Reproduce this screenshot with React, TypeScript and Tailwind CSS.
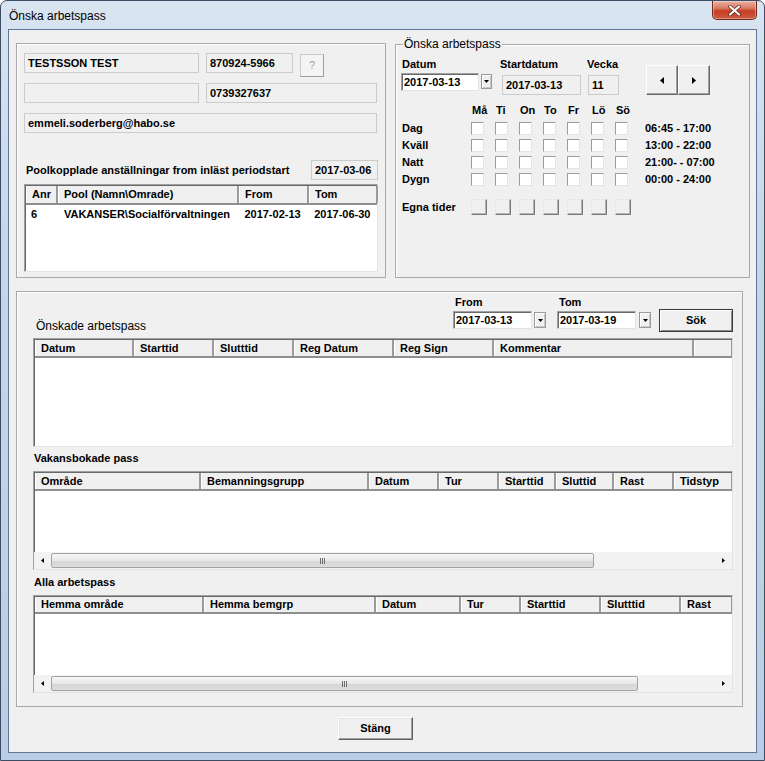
import React from "react";

type Col = { label: string; w: string };

const sunken =
  "border border-t-[#a0a0a0] border-l-[#a0a0a0] border-r-[#e3e3e3] border-b-[#e3e3e3] shadow-[inset_1px_1px_0_#696969]";
const raised =
  "border border-t-white border-l-white border-r-[#696969] border-b-[#696969] shadow-[inset_-1px_-1px_0_#a0a0a0]";

function RoBox({ w, children }: { w: string; children?: React.ReactNode }) {
  return (
    <div
      className={`${w} h-[20px] shrink-0 bg-[#f0f0f0] border border-[#cbcbcb] flex items-center pl-[3px] text-[11px] font-bold`}
    >
      {children}
    </div>
  );
}

function Tri({ dir, size = 3 }: { dir: "left" | "right" | "down"; size?: number }) {
  if (dir === "down")
    return (
      <svg width="5" height="3" viewBox="0 0 5 3">
        <path d="M0 0h5L2.5 3z" fill="#000" />
      </svg>
    );
  const w = size + 1;
  const h = size * 2 + 1;
  return (
    <svg width={w} height={h} viewBox={`0 0 ${w} ${h}`}>
      {dir === "left" ? (
        <path d={`M${w} 0V${h}L0 ${h / 2}z`} fill="#000" />
      ) : (
        <path d={`M0 0V${h}L${w} ${h / 2}z`} fill="#000" />
      )}
    </svg>
  );
}

function DropBtn({ className }: { className: string }) {
  return (
    <div
      className={`${className} shrink-0 bg-[#f0f0f0] border border-[#9a9a9a] shadow-[inset_1px_1px_0_#fff,inset_-1px_-1px_0_#c8c8c8] flex items-center justify-center`}
    >
      <Tri dir="down" />
    </div>
  );
}

function DateInput({ value }: { value: string }) {
  return (
    <div
      className={`w-[79px] h-[18px] shrink-0 bg-white ${sunken} flex items-center pl-[2px] text-[11px] font-bold`}
    >
      {value}
    </div>
  );
}

function Grip() {
  return (
    <div className="flex gap-[1px]">
      <span className="w-[1px] h-[6px] bg-[#6b6b6b]" />
      <span className="w-[1px] h-[6px] bg-[#6b6b6b]" />
      <span className="w-[1px] h-[6px] bg-[#6b6b6b]" />
    </div>
  );
}

function HScroll({ thumbW }: { thumbW: string }) {
  return (
    <div className="h-[17px] shrink-0 bg-[#f2f2f2] flex items-center">
      <div className="w-[17px] flex justify-center">
        <Tri dir="left" size={2} />
      </div>
      <div
        className={`${thumbW} h-[15px] rounded-[2px] border border-[#a3a3a3] bg-[linear-gradient(180deg,#f7f7f7_0%,#e8e8e8_50%,#d6d6d6_51%,#dcdcdc_100%)] flex items-center justify-center`}
      >
        <Grip />
      </div>
      <div className="flex-1" />
      <div className="w-[17px] flex justify-center">
        <Tri dir="right" size={2} />
      </div>
    </div>
  );
}

function Table({
  cols,
  h,
  headH,
  scroll,
}: {
  cols: Col[];
  h: string;
  headH: string;
  scroll?: string;
}) {
  return (
    <div className={`w-[700px] ${h} bg-white ${sunken} flex flex-col overflow-hidden`}>
      <div className={`${headH} shrink-0 flex bg-[#f0f0f0] border-b-2 border-b-[#8f8f8f] ml-[1px] mt-[1px]`}>
        {cols.map((c) => (
          <div
            key={c.label + c.w}
            className={`${c.w} shrink-0 h-full flex items-center pl-[6px] border-r-2 border-r-[#9a9a9a] shadow-[inset_1px_0_0_#fff] text-[11px] font-bold whitespace-nowrap overflow-hidden`}
          >
            {c.label}
          </div>
        ))}
      </div>
      <div className="flex-1" />
      {scroll && <HScroll thumbW={scroll} />}
    </div>
  );
}

const days = ["Må", "Ti", "On", "To", "Fr", "Lö", "Sö"];
const shifts = [
  ["Dag", "06:45 - 17:00"],
  ["Kväll", "13:00 - 22:00"],
  ["Natt", "21:00- - 07:00"],
  ["Dygn", "00:00 - 24:00"],
];

export default function App() {
  return (
    <div className="w-[765px] h-[761px] font-['Liberation_Sans',Arial,sans-serif] text-black flex flex-col px-[7px] pb-[7px] rounded-t-[7px] border border-[#3d4d63] bg-[linear-gradient(180deg,#d9e4f1_0%,#c7d7ea_30%,#b9cde4_100%)]">
      {/* title bar */}
      <div className="h-[28px] shrink-0 flex items-start justify-between">
        <div className="pt-[6px] pl-[1px] text-[12px] text-black">Önska arbetspass</div>
        <div className="w-[45px] h-[19px] mr-[0px] rounded-b-[5px] border border-t-0 border-[#6e2a1e] bg-[linear-gradient(180deg,#eab1a4_0%,#d87a64_40%,#c43e24_55%,#cf5a3e_100%)] flex items-center justify-center shadow-[inset_0_0_0_1px_rgba(255,255,255,0.35)]">
          <svg width="13" height="11" viewBox="0 0 13 11">
            <path d="M2 1.5l9 8M11 1.5l-9 8" stroke="#5b2118" strokeWidth="3.6" strokeLinecap="round" />
            <path d="M2 1.5l9 8M11 1.5l-9 8" stroke="#fff" strokeWidth="2.2" strokeLinecap="round" />
          </svg>
        </div>
      </div>

      {/* client area */}
      <div className="flex-1 bg-[#f0f0f0] border border-[#5e7594] flex flex-col">
        <div className="flex pt-[13px] pl-[7px]">
          {/* left panel */}
          <div className="w-[370px] h-[235px] shrink-0 border border-[#a8a8a8] shadow-[inset_1px_1px_0_#fff] pt-[9px] pl-[7px]">
            <div className="h-[30px] flex gap-[7px]">
              <RoBox w="w-[175px]">TESTSSON TEST</RoBox>
              <RoBox w="w-[87px]">870924-5966</RoBox>
              <div className="mt-[1px] w-[24px] h-[23px] bg-[#f4f4f4] border border-[#c8c8c8] border-r-[#9d9d9d] border-b-[#9d9d9d] flex items-center justify-center text-[11px] text-[#a0a0a0]">
                ?
              </div>
            </div>
            <div className="h-[30px] flex gap-[7px]">
              <RoBox w="w-[175px]" />
              <RoBox w="w-[171px]">0739327637</RoBox>
            </div>
            <RoBox w="w-[353px]">emmeli.soderberg@habo.se</RoBox>
            <div className="mt-[27px] flex items-center justify-between w-[354px]">
              <span className="ml-[2px] text-[11px] font-bold">Poolkopplade anställningar from inläst periodstart</span>
              <RoBox w="w-[67px]">2017-03-06</RoBox>
            </div>
            <div className={`mt-[4px] w-[354px] h-[88px] bg-white ${sunken} flex flex-col`}>
              <div className="h-[19px] shrink-0 flex bg-[#f0f0f0] border-b-2 border-b-[#8f8f8f] ml-[1px] mt-[1px]">
                {[
                  ["Anr", "w-[32px]"],
                  ["Pool (Namn\\Omrade)", "w-[181px]"],
                  ["From", "w-[70px]"],
                  ["Tom", "w-[69px]"],
                ].map(([l, w]) => (
                  <div
                    key={l}
                    className={`${w} shrink-0 h-full flex items-center pl-[6px] border-r-2 border-r-[#9a9a9a] shadow-[inset_1px_0_0_#fff] text-[11px] font-bold`}
                  >
                    {l}
                  </div>
                ))}
              </div>
              <div className="flex mt-[1px] ml-[1px] text-[11px] font-bold">
                <span className="w-[32px] pl-[5px]">6</span>
                <span className="w-[181px] pl-[6px]">VAKANSER\Socialförvaltningen</span>
                <span className="w-[70px] pl-[6px]">2017-02-13</span>
                <span className="w-[69px] pl-[6px]">2017-06-30</span>
              </div>
            </div>
          </div>

          {/* right group box */}
          <div className="relative ml-[9px] mt-[1px] w-[355px] h-[234px] shrink-0 border border-[#a8a8a8] shadow-[inset_1px_1px_0_#fff] pt-[13px] pl-[5px]">
            <span className="absolute -top-[8px] left-[7px] px-[1px] bg-[#f0f0f0] text-[12px] leading-[14px]">
              Önska arbetspass
            </span>
            <div className="flex items-start">
              <div className="flex flex-col">
                <span className="ml-[1px] h-[13px] leading-[13px] text-[11px] font-bold">Datum</span>
                <div className="mt-[2px] flex items-start">
                  <div className={`w-[78px] h-[18px] bg-white ${sunken} flex items-center pl-[2px] text-[11px] font-bold`}>
                    2017-03-13
                  </div>
                  <DropBtn className="ml-[2px] mt-[1px] w-[11px] h-[15px]" />
                </div>
              </div>
              <div className="ml-[8px] flex flex-col">
                <span className="h-[13px] leading-[13px] text-[11px] font-bold">Startdatum</span>
                <div className="mt-[4px] ml-[2px]">
                  <RoBox w="w-[79px]">2017-03-13</RoBox>
                </div>
              </div>
              <div className="ml-[6px] flex flex-col">
                <span className="h-[13px] leading-[13px] text-[11px] font-bold">Vecka</span>
                <div className="mt-[4px] ml-[1px]">
                  <RoBox w="w-[31px]">11</RoBox>
                </div>
              </div>
              <div className="ml-[27px] mt-[7px] flex">
                <div className={`w-[32px] h-[30px] bg-[#f0f0f0] ${raised} flex items-center justify-center`}>
                  <Tri dir="left" />
                </div>
                <div className={`w-[32px] h-[30px] bg-[#f0f0f0] ${raised} flex items-center justify-center`}>
                  <Tri dir="right" />
                </div>
              </div>
            </div>

            {/* day grid */}
            <div className="mt-[9px] flex h-[13px] items-center text-[11px] font-bold">
              <div className="w-[70px] shrink-0" />
              {days.map((d) => (
                <div key={d} className="w-[24px] shrink-0 pl-[1px] leading-[13px]">
                  {d}
                </div>
              ))}
            </div>
            <div className="mt-[3px] flex flex-col">
              {shifts.map(([l, t]) => (
                <div key={l} className="h-[17px] flex items-center text-[11px] font-bold">
                  <div className="w-[70px] shrink-0 pl-[1px]">{l}</div>
                  {days.map((d) => (
                    <div key={d} className="w-[24px] shrink-0">
                      <div className="w-[13px] h-[13px] bg-white border border-t-[#9c9c9c] border-l-[#9c9c9c] border-r-[#e4e4e4] border-b-[#e4e4e4]" />
                    </div>
                  ))}
                  <div className="ml-[6px]">{t}</div>
                </div>
              ))}
            </div>
            <div className="mt-[11px] h-[16px] flex items-center text-[11px] font-bold">
              <div className="w-[70px] shrink-0 pl-[1px]">Egna tider</div>
              {days.map((d) => (
                <div key={d} className="w-[24px] shrink-0">
                  <div className="w-[16px] h-[16px] bg-[#f0f0f0] border border-t-[#e8e8e8] border-l-[#e8e8e8] border-r-[#7a7a7a] border-b-[#7a7a7a] shadow-[inset_-1px_-1px_0_#b5b5b5]" />
                </div>
              ))}
            </div>
          </div>
        </div>

        {/* bottom panel */}
        <div className="ml-[7px] mt-[13px] w-[727px] h-[416px] shrink-0 border border-[#a8a8a8] shadow-[inset_1px_1px_0_#fff] pt-[4px] pl-[16px] flex flex-col">
          <div className="h-[37px] w-[700px] flex justify-between">
            <span className="self-end ml-[3px] mb-[0px] text-[12px] leading-[14px]">Önskade arbetspass</span>
            <div className="flex items-start">
              <div className="flex flex-col">
                <span className="ml-[2px] h-[13px] leading-[13px] text-[11px] font-bold">From</span>
                <div className="mt-[2px] flex items-start">
                  <DateInput value="2017-03-13" />
                  <DropBtn className="ml-[2px] mt-[1px] w-[12px] h-[16px]" />
                </div>
              </div>
              <div className="ml-[11px] flex flex-col">
                <span className="ml-[2px] h-[13px] leading-[13px] text-[11px] font-bold">Tom</span>
                <div className="mt-[2px] flex items-start">
                  <DateInput value="2017-03-19" />
                  <DropBtn className="ml-[3px] mt-[1px] w-[12px] h-[16px]" />
                </div>
              </div>
              <div className="ml-[8px] mt-[13px] w-[74px] h-[23px] bg-[#f0f0f0] border border-[#3a3a3a] shadow-[inset_1px_1px_0_#fff,inset_-1px_-1px_0_#8a8a8a] flex items-center justify-center text-[11px] font-bold">
                Sök
              </div>
            </div>
          </div>
          <div className="mt-[5px]">
            <Table
              h="h-[109px]"
              headH="h-[18px]"
              cols={[
                { label: "Datum", w: "w-[99px]" },
                { label: "Starttid", w: "w-[80px]" },
                { label: "Slutttid", w: "w-[80px]" },
                { label: "Reg Datum", w: "w-[100px]" },
                { label: "Reg Sign", w: "w-[100px]" },
                { label: "Kommentar", w: "w-[200px]" },
                { label: "", w: "w-[39px]" },
              ]}
            />
          </div>
          <span className="mt-[5px] ml-[1px] h-[13px] leading-[13px] text-[11px] font-bold">Vakansbokade pass</span>
          <div className="mt-[6px]">
            <Table
              h="h-[99px]"
              headH="h-[18px]"
              scroll="w-[543px]"
              cols={[
                { label: "Område", w: "w-[166px]" },
                { label: "Bemanningsgrupp", w: "w-[168px]" },
                { label: "Datum", w: "w-[70px]" },
                { label: "Tur", w: "w-[60px]" },
                { label: "Starttid", w: "w-[57px]" },
                { label: "Sluttid", w: "w-[58px]" },
                { label: "Rast", w: "w-[60px]" },
                { label: "Tidstyp", w: "w-[59px]" },
              ]}
            />
          </div>
          <span className="mt-[6px] ml-[1px] h-[13px] leading-[13px] text-[11px] font-bold">Alla arbetspass</span>
          <div className="mt-[6px]">
            <Table
              h="h-[98px]"
              headH="h-[17px]"
              scroll="w-[587px]"
              cols={[
                { label: "Hemma område", w: "w-[169px]" },
                { label: "Hemma bemgrp", w: "w-[172px]" },
                { label: "Datum", w: "w-[85px]" },
                { label: "Tur", w: "w-[60px]" },
                { label: "Starttid", w: "w-[80px]" },
                { label: "Slutttid", w: "w-[80px]" },
                { label: "Rast", w: "w-[52px]" },
              ]}
            />
          </div>
        </div>

        <div className="mt-[10px] ml-[329px] w-[75px] h-[23px] bg-[#f0f0f0] border border-t-white border-l-white border-r-[#5f5f5f] border-b-[#5f5f5f] shadow-[inset_-1px_-1px_0_#a0a0a0,inset_1px_1px_0_#e3e3e3] flex items-center justify-center text-[11px] font-bold">
          Stäng
        </div>
      </div>
    </div>
  );
}
